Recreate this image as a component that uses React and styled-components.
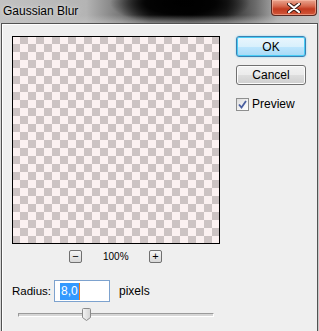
import styled, { createGlobalStyle } from "styled-components";

const GlobalStyle = createGlobalStyle`
  html, body {
    margin: 0;
    padding: 0;
    background: #c4c4c4;
  }
  body {
    font-family: "Liberation Sans", Arial, sans-serif;
  }
`;

/*
  Window chrome
*/
const Window = styled.div`
  width: 319px;
  height: 331px;
  display: flex;
  flex-direction: column;
  overflow: hidden;
  background: linear-gradient(90deg, #d6d6d6 0%, #c9c9c9 100%);
`;

const TitleBar = styled.div`
  position: relative;
  height: 23px;
  flex: none;
  display: flex;
  align-items: flex-start;
  justify-content: space-between;
  background: linear-gradient(to right, #c2c2c2 0%, #b4b4b4 27%, #767676 38%, #242424 47%, #0a0a0a 60%, #262626 71%, #6a6a6a 80%, #acacac 87%, #c4c4c4 100%);

  &::before {
    content: "";
    position: absolute;
    inset: 0;
    background: radial-gradient(70px 22px at 180px 3px, #000000 0%, rgba(0, 0, 0, 0.9) 50%, rgba(0, 0, 0, 0) 100%);
  }

  &::after {
    content: "";
    position: absolute;
    left: 0;
    right: 0;
    bottom: 0;
    height: 8px;
    background: linear-gradient(to bottom, rgba(196, 196, 196, 0), rgba(196, 196, 196, 0.6));
  }
`;

const Title = styled.span`
  position: relative;
  z-index: 1;
  font-family: "Liberation Sans", Arial, sans-serif;
  font-size: 12px;
  color: #000;
  padding: 4px 0 0 3px;
  text-shadow: 0 0 6px rgba(230, 230, 230, 0.9), 0 0 3px rgba(230, 230, 230, 0.8);
`;

const CloseButton = styled.div`
  position: relative;
  z-index: 1;
  width: 44px;
  height: 15px;
  margin-right: 2px;
  border: 1px solid #5a2a22;
  border-top: none;
  border-radius: 0 0 4px 4px;
  display: flex;
  align-items: center;
  justify-content: center;
  background: linear-gradient(180deg, #e9a58f 0%, #d76a4f 40%, #c23b20 60%, #d2573a 100%);
  box-shadow: inset 0 0 0 1px rgba(255, 200, 180, 0.5);
`;

const Body = styled.div`
  flex: 1;
  margin: 0 1px 0 1px;
  border: 1px solid #525252;
  border-bottom: none;
  background: #efefef;
  box-shadow: inset 1px 1px 0 #ffffff;
  padding: 12px 10px 0 10px;
  display: flex;
  gap: 16px;
`;

/*
  Left column: preview, zoom, radius, slider
*/
const LeftColumn = styled.div`
  width: 208px;
  display: flex;
  flex-direction: column;
`;

const Preview = styled.div`
  width: 206px;
  height: 206px;
  border: 1px solid #000;
  background: repeating-conic-gradient(#ccc3c3 0% 25%, #fbf1f1 0% 50%) -1px -1px / 16px 16px;
`;

const ZoomRow = styled.div`
  display: flex;
  align-items: center;
  justify-content: center;
  gap: 21px;
  margin-top: 6px;
  height: 13px;
  padding-right: 1px;
`;

const SmallButton = styled.div`
  width: 11px;
  height: 11px;
  border: 1px solid #707070;
  border-radius: 2px;
  background: linear-gradient(180deg, #f6f6f6 0%, #e6e6e6 50%, #d8d8d8 100%);
  display: flex;
  align-items: center;
  justify-content: center;
  font-size: 11px;
  line-height: 1;
  color: #000;
`;

const ZoomText = styled.span`
  font-size: 10px;
  color: #000;
  width: 25px;
  text-align: center;
`;

const RadiusRow = styled.div`
  display: flex;
  align-items: center;
  margin-top: 17px;
  height: 22px;
`;

const Label = styled.span`
  font-size: ${(p) => (p.$small ? "11.5px" : "12px")};
  color: #000;
`;

const Input = styled.div`
  width: 49px;
  height: 20px;
  margin: 0 9px 0 3px;
  border: 1px solid #7da2ce;
  background: #fff;
  display: flex;
  align-items: center;
  padding-left: 5px;
`;

const Selected = styled.span`
  font-size: 12px;
  color: #fff;
  background: #3399ff;
  padding: 1px 1px 2px 1px;
  border-right: 1px solid #f07a1a;
`;

const SliderRow = styled.div`
  position: relative;
  margin: 6px 0 0 6px;
  width: 196px;
  height: 14px;
  display: flex;
  align-items: center;
`;

const Track = styled.div`
  width: 100%;
  height: 2px;
  background: #d6d6d6;
  border: 1px solid #9a9a9a;
  border-bottom-color: #ffffff;
  border-right-color: #ffffff;
`;

const Thumb = styled.svg`
  position: absolute;
  left: 64px;
  top: 0;
`;

/*
  Right column: buttons and checkbox
*/
const RightColumn = styled.div`
  display: flex;
  flex-direction: column;
  width: 70px;
`;

const Button = styled.div`
  height: ${(p) => (p.$primary ? "19px" : "18px")};
  border: 1px solid ${(p) => (p.$primary ? "#3c7fb1" : "#707070")};
  border-radius: 3px;
  background: ${(p) =>
    p.$primary
      ? "linear-gradient(180deg, #eaf6fd 0%, #d9f0fc 50%, #bee6fd 52%, #a7d9f5 100%)"
      : "linear-gradient(180deg, #f2f2f2 0%, #ebebeb 50%, #dddddd 52%, #cfcfcf 100%)"};
  box-shadow: ${(p) =>
    p.$primary
      ? "inset 0 0 0 1px #48cdf6, 0 0 2px #7fd6f8"
      : "inset 0 0 0 1px #fcfcfc"};
  display: flex;
  align-items: center;
  justify-content: center;
  font-size: 12px;
  color: #000;
  margin-bottom: ${(p) => (p.$primary ? "8px" : "12px")};
`;

const CheckRow = styled.div`
  display: flex;
  align-items: center;
  gap: 3px;
`;

const Checkbox = styled.div`
  width: 11px;
  height: 11px;
  border: 1px solid #8e8f8f;
  background: linear-gradient(135deg, #dcdcdc 0%, #f4f4f4 60%, #ffffff 100%);
  display: flex;
  align-items: center;
  justify-content: center;
`;

export default function App() {
  return (
    <>
      <GlobalStyle />
      <Window>
        <TitleBar>
          <Title>Gaussian Blur</Title>
          <CloseButton>
            <svg width="14" height="10" viewBox="0 0 14 10">
              <path
                d="M2 1 L12 9 M12 1 L2 9"
                stroke="#3a1a14"
                strokeWidth="4"
                strokeLinecap="round"
              />
              <path
                d="M2 1 L12 9 M12 1 L2 9"
                stroke="#ffffff"
                strokeWidth="2.2"
                strokeLinecap="round"
              />
            </svg>
          </CloseButton>
        </TitleBar>
        <Body>
          <LeftColumn>
            <Preview />
            <ZoomRow>
              <SmallButton>−</SmallButton>
              <ZoomText>100%</ZoomText>
              <SmallButton>+</SmallButton>
            </ZoomRow>
            <RadiusRow>
              <Label $small>Radius:</Label>
              <Input>
                <Selected>8,0</Selected>
              </Input>
              <Label>pixels</Label>
            </RadiusRow>
            <SliderRow>
              <Track />
              <Thumb width="9" height="13" viewBox="0 0 9 13">
                <defs>
                  <linearGradient id="thumbFill" x1="0" y1="0" x2="1" y2="0">
                    <stop offset="0" stopColor="#f4f4f4" />
                    <stop offset="1" stopColor="#d4d4d4" />
                  </linearGradient>
                </defs>
                <path
                  d="M1.5 0.5 H7.5 Q8.5 0.5 8.5 1.5 V9.5 L4.5 12.5 L0.5 9.5 V1.5 Q0.5 0.5 1.5 0.5 Z"
                  fill="url(#thumbFill)"
                  stroke="#8a8a8a"
                />
              </Thumb>
            </SliderRow>
          </LeftColumn>
          <RightColumn>
            <Button $primary>OK</Button>
            <Button>Cancel</Button>
            <CheckRow>
              <Checkbox>
                <svg width="9" height="9" viewBox="0 0 9 9">
                  <path
                    d="M1 4.5 L3.5 7.5 L8 1"
                    fill="none"
                    stroke="#4a5fa0"
                    strokeWidth="1.8"
                  />
                </svg>
              </Checkbox>
              <Label>Preview</Label>
            </CheckRow>
          </RightColumn>
        </Body>
      </Window>
    </>
  );
}
